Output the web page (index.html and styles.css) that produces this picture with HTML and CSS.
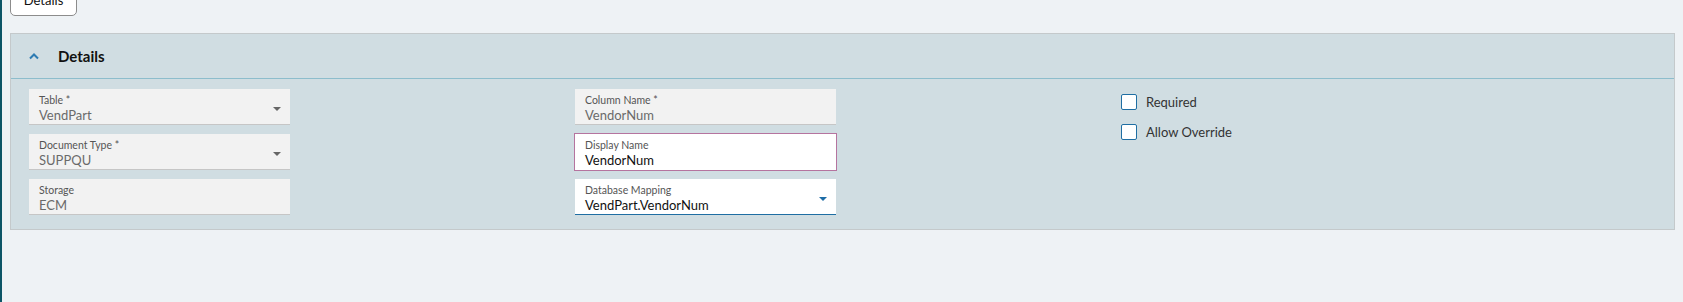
FILE: index.html
```html
<!DOCTYPE html>
<html lang="en">
<head>
<meta charset="utf-8">
<title>Details</title>
<link rel="stylesheet" href="styles.css">
</head>
<body>
<div class="page">
  <div class="toolbar">
    <button class="btn" type="button">Details</button>
  </div>
  <section class="panel">
    <header class="panel-head">
      <svg class="chev" width="10" height="7" viewBox="0 0 10 7" aria-hidden="true"><path d="M1 5.5 L5 1.5 L9 5.5" fill="none" stroke="#2d7bb2" stroke-width="2"/></svg>
      <h2 class="panel-title">Details</h2>
    </header>
    <div class="panel-body">
      <div class="col">
        <div class="field readonly">
          <span class="lbl">Table *</span>
          <span class="val">VendPart</span>
          <span class="caret grey"></span>
        </div>
        <div class="field readonly">
          <span class="lbl">Document Type *</span>
          <span class="val">SUPPQU</span>
          <span class="caret grey"></span>
        </div>
        <div class="field readonly">
          <span class="lbl">Storage</span>
          <span class="val">ECM</span>
        </div>
      </div>
      <div class="col">
        <div class="field readonly">
          <span class="lbl">Column Name *</span>
          <span class="val">VendorNum</span>
        </div>
        <div class="field editable focused">
          <span class="lbl">Display Name</span>
          <span class="val">VendorNum</span>
        </div>
        <div class="field editable combo">
          <span class="lbl">Database Mapping</span>
          <span class="val">VendPart.VendorNum</span>
          <span class="caret blue"></span>
        </div>
      </div>
      <div class="col checks">
        <label class="check"><span class="box"></span><span class="check-text">Required</span></label>
        <label class="check"><span class="box"></span><span class="check-text">Allow Override</span></label>
      </div>
    </div>
  </section>
</div>
</body>
</html>
```
FILE: styles.css
```css
html, body {
  margin: 0;
  height: 100%;
}
body {
  background: #eef2f5;
  border-left: 2px solid #0c5566;
  box-sizing: border-box;
  overflow: hidden;
  font-family: Lato, "Open Sans", sans-serif;
  color: #222;
}
.page {
  padding: 0 8px;
}
.toolbar {
  height: 16px;
  display: flex;
  align-items: flex-end;
}
.btn {
  height: 32px;
  flex: none;
  width: 67px;
  padding: 0;
  background: #fff;
  border: 1px solid #8c8c8c;
  border-radius: 5px;
  font-family: Lato, "Open Sans", sans-serif;
  font-size: 13px;
  color: #111;
}
.panel {
  margin-top: 17px;
  background: #d0dde2;
  border: 1px solid #c4c9cb;
}
.panel-head {
  height: 44px;
  border-bottom: 1px solid #8dbdcc;
  display: flex;
  align-items: center;
  padding-left: 18px;
  gap: 19px;
}
.chev {
  display: block;
}
.panel-title {
  margin: 0;
  font-size: 15px;
  font-weight: 700;
  color: #111;
}
.panel-body {
  padding: 10px 18px 14px;
  display: grid;
  grid-template-columns: 546px 546px 1fr;
}
.col {
  display: flex;
  flex-direction: column;
  gap: 9px;
}
.field {
  position: relative;
  width: 261px;
  height: 36px;
  box-sizing: border-box;
  padding: 5px 10px 0;
  display: flex;
  flex-direction: column;
}
.readonly {
  background: #f2f2f2;
  border-bottom: 1px solid #c6c6c6;
}
.editable {
  background: #fff;
}
.focused {
  border: 1px solid #b5749f;
  width: 263px;
  height: 38px;
  margin: -1px 0 -1px -1px;
}
.combo {
  border-bottom: 1px solid #1f6ea3;
}
.lbl {
  font-size: 10.5px;
  line-height: 13px;
  color: #555;
}
.val {
  font-size: 13px;
  line-height: 16px;
  color: #6a6a6a;
}
.editable .val {
  color: #111;
}
.caret {
  position: absolute;
  right: 9px;
  top: 18px;
  width: 0;
  height: 0;
  border-left: 4px solid transparent;
  border-right: 4px solid transparent;
  border-top: 4px solid #666;
}
.caret.blue {
  border-top-color: #1d6ca6;
}
.checks {
  padding-top: 5px;
  gap: 14px;
}
.check {
  display: flex;
  align-items: center;
  gap: 9px;
  height: 16px;
}
.box {
  width: 16px;
  height: 16px;
  box-sizing: border-box;
  border: 1.5px solid #1f6ea3;
  border-radius: 2px;
  background: #fff;
}
.check-text {
  font-size: 13px;
  color: #333;
}
```
